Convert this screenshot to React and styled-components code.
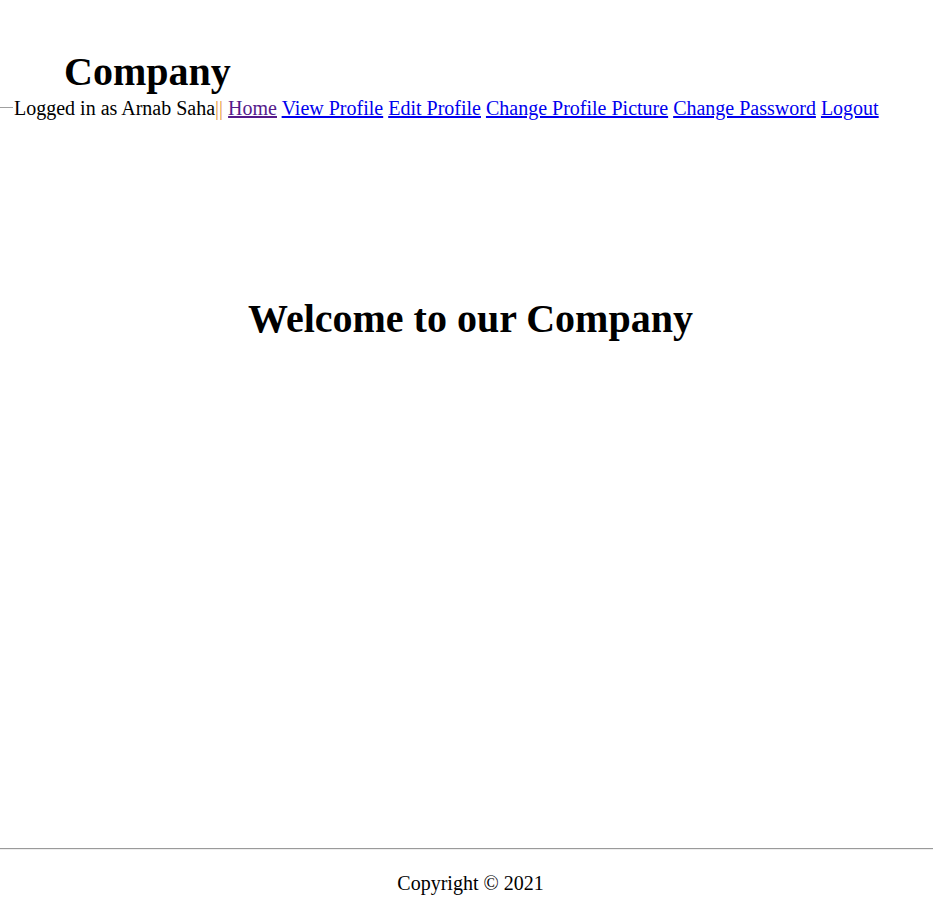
import React from 'react'
import styled, { createGlobalStyle } from 'styled-components'

const GlobalStyle = createGlobalStyle`
  body {
    margin: 0;
    background: #fff;
    font-family: "Liberation Serif", "Times New Roman", serif;
    font-size: 20px;
    color: #000;
  }
`

const Page = styled.div`
  display: flex;
  flex-direction: column;
  min-height: 910px;
`

const Header = styled.header`
  display: flex;
  flex-direction: column;
  padding-top: 49px;
`

const Brand = styled.h1`
  margin: 0 0 2px 64px;
  font-size: 40px;
  line-height: 46px;
  font-weight: bold;
`

const Nav = styled.nav`
  white-space: nowrap;
  line-height: 23px;
`

const Dash = styled.span`
  display: inline-block;
  width: 13px;
  height: 0;
  border-top: 1px solid #a0a0a0;
  margin-right: 1px;
  vertical-align: 7px;
`

const Separator = styled.span`
  color: #e89a3c;
`

const NavLink = styled.a`
  color: ${(p) => (p.$visited ? '#551a8b' : '#0000ee')};
  text-decoration: underline;
`

const Main = styled.main`
  flex: 1;
  display: flex;
  justify-content: center;
  padding: 176px 0 0 8px;
`

const Welcome = styled.h1`
  margin: 0;
  font-size: 40px;
  line-height: 46px;
  font-weight: bold;
`

const Footer = styled.footer`
  display: flex;
  flex-direction: column;
  align-items: center;
  padding: 0 0 15px 8px;
`

const Rule = styled.hr`
  align-self: stretch;
  margin: 0 0 0 -8px;
  border: 0;
  border-top: 1px solid #9a9a9a;
  border-bottom: 1px solid #eee;
`

const Copy = styled.p`
  margin: 22px 0 0;
  line-height: 23px;
`

const links = ['Home', 'View Profile', 'Edit Profile', 'Change Profile Picture', 'Change Password', 'Logout']

export default function App() {
  return (
    <>
      <GlobalStyle />
      <Page>
        <Header>
          <Brand>Company</Brand>
          <Nav>
            <Dash />
            Logged in as Arnab Saha<Separator>||</Separator>
            {links.map((l, i) => (
              <React.Fragment key={l}>
                {' '}
                <NavLink href='#' $visited={i === 0}>{l}</NavLink>
              </React.Fragment>
            ))}
          </Nav>
        </Header>
        <Main>
          <Welcome>Welcome to our Company</Welcome>
        </Main>
        <Footer>
          <Rule />
          <Copy>Copyright © 2021</Copy>
        </Footer>
      </Page>
    </>
  )
}
